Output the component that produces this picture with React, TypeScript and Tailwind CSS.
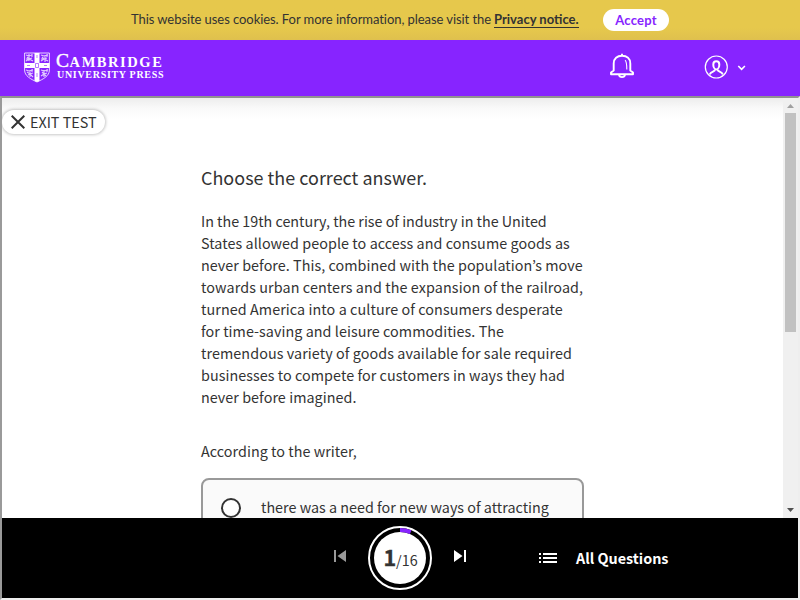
import React from "react";

const PASSAGE = [
  { text: "In the 19th century, the rise of industry in the United", tracking: "tracking-[-0.02px]" },
  { text: "States allowed people to access and consume goods as", tracking: "tracking-[0.055px]" },
  { text: "never before. This, combined with the population’s move", tracking: "tracking-[0.045px]" },
  { text: "towards urban centers and the expansion of the railroad,", tracking: "tracking-[0.1px]" },
  { text: "turned America into a culture of consumers desperate", tracking: "tracking-[0.075px]" },
  { text: "for time-saving and leisure commodities. The", tracking: "tracking-[0.045px]" },
  { text: "tremendous variety of goods available for sale required", tracking: "tracking-[0.075px]" },
  { text: "businesses to compete for customers in ways they had", tracking: "tracking-[0.05px]" },
  { text: "never before imagined.", tracking: "tracking-[0.05px]" },
];

function CookieBar() {
  return (
    <div className="flex h-10 shrink-0 items-center bg-gradient-to-b from-[#e6c84c] from-70% to-[#dfc04e] pl-[131px] font-['Lato',sans-serif] text-[13px] text-[#333]">
      <div className="w-[363px] whitespace-nowrap tracking-[-0.065px]">
        This website uses cookies. For more information, please visit the
      </div>
      <a className="w-[85px] border-b border-[#333] leading-[15px] font-bold whitespace-nowrap">Privacy notice.</a>
      <button className="ml-6 h-[22px] w-[66px] rounded-full bg-white text-[13px] leading-[21px] font-bold tracking-[0.250px] text-[#8724ff]">
        Accept
      </button>
    </div>
  );
}

function Shield() {
  return (
    <svg width="26" height="31" viewBox="0 0 26 31" fill="none" stroke="#fff">
      <path d="M.6 1h24.8v17c0 6-6 9-12.400 12C6.600 27 .6 24 .6 18z" strokeWidth=".8" />
      <path d="M10.500 1h5v10h10v5h-10v13L13 30l-2.500-1V16H.6v-5h9.900z" fill="#fff" stroke="none" />
      <path d="M2 3l3 1 3-1M3 5l2 2 3-1M2 9l3-2 4 2M17 3l3 1 4-1M18 5l2 2 3-1M17 9l3-2 4 2M2 18l3 1 4-1M3 20l3 2 3-1M4 23l2-1 3 3M17 18l3 1 4-1M18 20l2 2 3-1M17 24l3-2 2 2M8 2v3M3 6v2M18 6v2M23 2v3M8 17v3M23 17v3M5 2v7M21 3v7M6 18v7M20 18v7" strokeWidth="1.100" strokeOpacity=".75" />
      <path d="M11.500 11.500h3v4h-3zM13 3v3M13 21v4M3 13.500h3M20 13.500h3" stroke="#8724ff" strokeWidth="1" strokeOpacity=".6" />
    </svg>
  );
}

function Header() {
  return (
    <header className="flex h-14 shrink-0 items-start bg-[#8724ff] pl-6 text-white">
      <div className="flex pt-3">
        <Shield />
        <div className="ml-[6px] font-['Liberation_Serif',serif] whitespace-nowrap">
          <div className="flex h-[17px] items-baseline text-[14.500px] leading-[17px] font-bold tracking-[1.550px]">
            <span className="text-[19.500px] font-normal tracking-[0.600px] [-webkit-text-stroke:0.400px_white]">C</span>AMBRIDGE
          </div>
          <div className="pl-px text-[10px] leading-[12px] font-bold tracking-[0.700px]">UNIVERSITY PRESS</div>
        </div>
      </div>
      <svg className="mt-[13px] ml-auto" width="26" height="26" viewBox="0 0 26 26" fill="none" stroke="#fff" strokeLinejoin="round">
        <path d="M4.700 17.500V10.500c0-5 3.500-7.700 8.300-7.700s8.300 2.700 8.300 7.700v7l2.700 2v1.800H2v-1.800zM13 3V.8" strokeWidth="1.900" />
        <path d="M10 21.700c.5 3.200 5.500 3.200 6 0" strokeWidth="1.900" />
        <path d="M16 7.200q1.800 1 1.800 9.300" strokeWidth="1.100" />
      </svg>
      <svg className="mt-[15px] ml-[69px]" width="24" height="24" viewBox="0 0 24 24" fill="none" stroke="#fff">
        <circle cx="12.300" cy="12" r="11" strokeWidth="1.200" />
        <path d="M12.300 6.200c-2 0-3 1.300-3 3.200s1 5 3 5 3-3.100 3-5-1-3.200-3-3.200z" strokeWidth="2" />
        <path d="M11 14.500c0 2.500-4 1.500-5.300 5M13.600 14.500c0 2.500 4 1.500 5.300 5" strokeWidth="2" />
      </svg>
      <svg className="mt-[25px] mr-[54px] ml-[9px]" width="9" height="6" viewBox="0 0 9 6" fill="none" stroke="#fff" strokeWidth="1.600">
        <path d="M1.300 1l3.300 3.300L7.900 1" />
      </svg>
    </header>
  );
}

function Scrollbar() {
  return (
    <div className="flex w-[15px] shrink-0 flex-col items-center bg-[#f0f0f0]">
      <svg className="h-[15px] w-[15px] shrink-0" viewBox="0 0 15 15">
        <path d="M4 10l3.500-4 3.500 4z" fill="#a0a0a0" />
      </svg>
      <div className="h-[219px] w-[11px] bg-[#c1c1c1]" />
      <svg className="mt-auto h-[15px] w-[15px] shrink-0" viewBox="0 0 15 15">
        <path d="M4 5l3.500 4L11 5z" fill="#505050" />
      </svg>
    </div>
  );
}

function TestPage() {
  return (
    <main className="flex min-h-0 flex-1 overflow-hidden bg-white">
      <div className="min-w-0 flex-1 overflow-hidden bg-[linear-gradient(#ededed,#f9f9f9_10px,#fff_22px)]">
        <div className="pt-3">
          <button className="flex h-6 w-[103px] items-center rounded-full bg-white pl-[9px] text-[14.350px] leading-6 whitespace-nowrap shadow-[0_0_3px_1px_rgba(0,0,0,0.22)]">
            <svg className="mr-[5px] shrink-0" width="14" height="14" viewBox="0 0 14 14" stroke="#333" strokeWidth="2">
              <path d="M.7.7l12.600 12.600M13.300.7L.7 13.300" />
            </svg>
            EXIT TEST
          </button>
        </div>
        <div className="ml-[199px] w-[383px] pt-[31px]">
          <h1 className="h-6 text-[17.940px] leading-6 tracking-[0.020px] whitespace-nowrap">Choose the correct answer.</h1>
          <p className="mt-[21px] text-[14.350px] leading-[22px] whitespace-nowrap">
            {PASSAGE.map(({ text, tracking }) => (
              <span key={text} className={`block ${tracking}`}>{text}</span>
            ))}
          </p>
          <p className="mt-8 text-[14.350px] leading-[22px] tracking-[0.040px]">According to the writer,</p>
          <div className="mt-4 flex h-24 rounded-lg border-2 border-[#999] bg-[#fafafa] pt-4 pl-[18px]">
            <span className="mt-0.5 h-5 w-5 rounded-full border-2 border-[#333] bg-white" />
            <span className="ml-5 text-[14.350px] leading-[22px] whitespace-nowrap">there was a need for new ways of attracting</span>
          </div>
        </div>
      </div>
      <Scrollbar />
    </main>
  );
}

function BottomBar() {
  return (
    <footer className="flex h-20 shrink-0 items-start bg-black pl-[332px] text-white">
      <svg className="mt-8" width="12" height="12" viewBox="0 0 12 12" fill="#999">
        <path d="M0 0h2v12H0zM12 0v12L3.500 6z" />
      </svg>
      <div className="relative mt-2 ml-[22px] h-16 w-16">
        <svg width="64" height="64" viewBox="0 0 64 64" fill="none">
          <circle cx="32" cy="32" r="31" stroke="#fff" strokeWidth="2" />
          <circle cx="32" cy="32" r="26" fill="#fff" />
          <path d="M32 4a28 28 0 0 1 10.700 2.120" stroke="#8724ff" strokeWidth="4" />
        </svg>
        <div className="absolute inset-0 flex items-baseline justify-center pl-px text-[14.350px] leading-[62px] text-[#333]">
          <b className="text-[21.500px] [-webkit-text-stroke:0.400px_#333]">1</b>/16
        </div>
      </div>
      <svg className="mt-8 ml-[22px]" width="12" height="12" viewBox="0 0 12 12" fill="#fff">
        <path d="M0 0v12l8.500-6zM10 0h2v12h-2z" />
      </svg>
      <svg className="mt-[35px] ml-[73px]" width="18" height="10" viewBox="0 0 18 10" fill="#fff">
        <path d="M0 0h2v2H0zM4 0h14v2H4zM0 4h2v2H0zM4 4h14v2H4zM0 8h2v2H0zM4 8h14v2H4z" />
      </svg>
      <span className="mt-[29px] ml-[19px] text-[14.350px] leading-[22px] font-bold whitespace-nowrap">All Questions</span>
    </footer>
  );
}

export default function App() {
  return (
    <div className="flex h-[600px] w-[800px] flex-col overflow-hidden">
      <CookieBar />
      <Header />
      <div className="flex min-h-0 flex-1 flex-col border-2 border-t-[#929292] border-r-[#eee] border-b-[#eee] border-l-[#9a9a9a] font-['Noto_Sans_CJK_KR',sans-serif] text-[#333]">
        <TestPage />
        <BottomBar />
      </div>
    </div>
  );
}
